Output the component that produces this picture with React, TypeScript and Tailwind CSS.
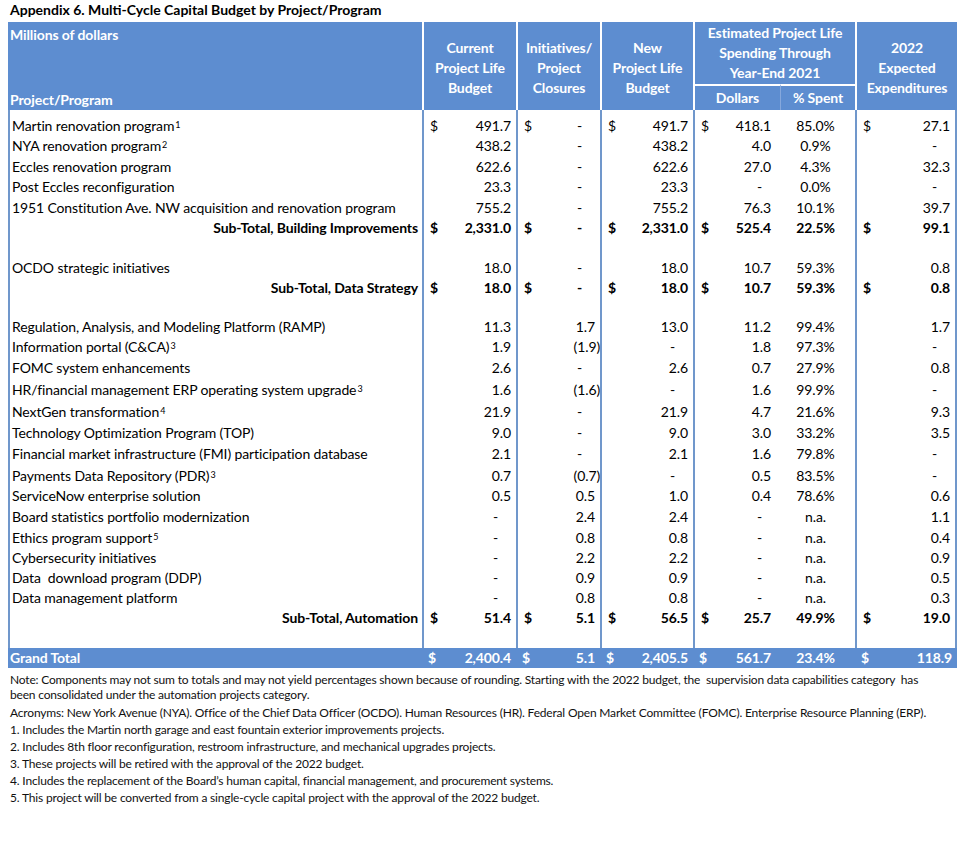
import React from 'react';

type Cell = { v: string; d?: boolean };

interface Row {
    kind: 'item' | 'sub' | 'blank';
    label?: string;
    sup?: string;
    h: number;
    cells?: Cell[];
    pct?: string;
}

const COLS = 'grid grid-cols-[414px_94px_84px_93px_87px_75px_102px]';
const FONT = { fontFamily: 'Lato, "Open Sans", sans-serif' };

const c = (v: string, d?: boolean): Cell => ({ v, d });

const rows: Row[] = [
    { kind: 'item', label: 'Martin renovation program', sup: '1', h: 26, cells: [c('491.7', true), c('-', true), c('491.7', true), c('418.1', true), c('27.1', true)], pct: '85.0%' },
    { kind: 'item', label: 'NYA renovation program', sup: '2', h: 20, cells: [c('438.2'), c('-'), c('438.2'), c('4.0'), c('-')], pct: '0.9%' },
    { kind: 'item', label: 'Eccles renovation program', h: 21, cells: [c('622.6'), c('-'), c('622.6'), c('27.0'), c('32.3')], pct: '4.3%' },
    { kind: 'item', label: 'Post Eccles reconfiguration', h: 20, cells: [c('23.3'), c('-'), c('23.3'), c('-'), c('-')], pct: '0.0%' },
    { kind: 'item', label: '1951 Constitution Ave. NW acquisition and renovation program', h: 21, cells: [c('755.2'), c('-'), c('755.2'), c('76.3'), c('39.7')], pct: '10.1%' },
    { kind: 'sub', label: 'Sub-Total, Building Improvements', h: 20, cells: [c('2,331.0', true), c('-', true), c('2,331.0', true), c('525.4', true), c('99.1', true)], pct: '22.5%' },
    { kind: 'blank', h: 20 },
    { kind: 'item', label: 'OCDO strategic initiatives', h: 20, cells: [c('18.0'), c('-'), c('18.0'), c('10.7'), c('0.8')], pct: '59.3%' },
    { kind: 'sub', label: 'Sub-Total, Data Strategy', h: 20, cells: [c('18.0', true), c('-', true), c('18.0', true), c('10.7', true), c('0.8', true)], pct: '59.3%' },
    { kind: 'blank', h: 20 },
    { kind: 'item', label: 'Regulation, Analysis, and Modeling Platform (RAMP)', h: 19, cells: [c('11.3'), c('1.7'), c('13.0'), c('11.2'), c('1.7')], pct: '99.4%' },
    { kind: 'item', label: 'Information portal (C&CA)', sup: '3', h: 20, cells: [c('1.9'), c('(1.9)'), c('-'), c('1.8'), c('-')], pct: '97.3%' },
    { kind: 'item', label: 'FOMC system enhancements', h: 21, cells: [c('2.6'), c('-'), c('2.6'), c('0.7'), c('0.8')], pct: '27.9%' },
    { kind: 'item', label: 'HR/financial management ERP operating system upgrade', sup: '3', h: 22, cells: [c('1.6'), c('(1.6)'), c('-'), c('1.6'), c('-')], pct: '99.9%' },
    { kind: 'item', label: 'NextGen transformation', sup: '4', h: 22, cells: [c('21.9'), c('-'), c('21.9'), c('4.7'), c('9.3')], pct: '21.6%' },
    { kind: 'item', label: 'Technology Optimization Program (TOP)', h: 21, cells: [c('9.0'), c('-'), c('9.0'), c('3.0'), c('3.5')], pct: '33.2%' },
    { kind: 'item', label: 'Financial market infrastructure (FMI) participation database', h: 21, cells: [c('2.1'), c('-'), c('2.1'), c('1.6'), c('-')], pct: '79.8%' },
    { kind: 'item', label: 'Payments Data Repository (PDR)', sup: '3', h: 22, cells: [c('0.7'), c('(0.7)'), c('-'), c('0.5'), c('-')], pct: '83.5%' },
    { kind: 'item', label: 'ServiceNow enterprise solution', h: 20, cells: [c('0.5'), c('0.5'), c('1.0'), c('0.4'), c('0.6')], pct: '78.6%' },
    { kind: 'item', label: 'Board statistics portfolio modernization', h: 21, cells: [c('-'), c('2.4'), c('2.4'), c('-'), c('1.1')], pct: 'n.a.' },
    { kind: 'item', label: 'Ethics program support', sup: '5', h: 21, cells: [c('-'), c('0.8'), c('0.8'), c('-'), c('0.4')], pct: 'n.a.' },
    { kind: 'item', label: 'Cybersecurity initiatives', h: 20, cells: [c('-'), c('2.2'), c('2.2'), c('-'), c('0.9')], pct: 'n.a.' },
    { kind: 'item', label: 'Data\u00a0 download program (DDP)', h: 20, cells: [c('-'), c('0.9'), c('0.9'), c('-'), c('0.5')], pct: 'n.a.' },
    { kind: 'item', label: 'Data management platform', h: 20, cells: [c('-'), c('0.8'), c('0.8'), c('-'), c('0.3')], pct: 'n.a.' },
    { kind: 'sub', label: 'Sub-Total, Automation', h: 20, cells: [c('51.4', true), c('5.1', true), c('56.5', true), c('25.7', true), c('19.0', true)], pct: '49.9%' },
    { kind: 'blank', h: 20 },
];

const grandTotal: Cell[] = [c('2,400.4', true), c('5.1', true), c('2,405.5', true), c('561.7', true), c('118.9', true)];

const notes = [
    'Acronyms: New York Avenue (NYA). Office of the Chief Data Officer (OCDO). Human Resources (HR). Federal Open Market Committee (FOMC). Enterprise Resource Planning (ERP).',
    '1. Includes the Martin north garage and east fountain exterior improvements projects.',
    '2. Includes 8th floor reconfiguration, restroom infrastructure, and mechanical upgrades projects.',
    '3. These projects will be retired with the approval of the 2022 budget.',
    '4. Includes the replacement of the Board\u2019s human capital, financial management, and procurement systems.',
    '5. This project will be converted from a single-cycle capital project with the approval of the 2022 budget.',
];

// one accounting-style value: "$" left, number right, dash set in from the edge
const Money: React.FC<{ cell?: Cell; border?: string; padR?: string }> = ({ cell, border = '', padR = 'pr-[5px]' }) => {
    if (!cell) return <div className={border} />;
    const paren = cell.v.startsWith('(');
    const dash = cell.v === '-';
    return (
        <div className={`flex items-end justify-between pl-[6px] pb-[2px] ${border}`}>
            <span>{cell.d ? '$' : ''}</span>
            <span className={paren ? 'pr-0' : dash ? 'pr-[18px]' : padR}>{cell.v}</span>
        </div>
    );
};

const bl = 'border-l-2 border-[#7097cb]';

const HeaderCell: React.FC<{ className?: string; children: React.ReactNode }> = ({ className = '', children }) => (
    <div className={`flex items-center justify-center text-center leading-[20px] ${className}`}>{children}</div>
);

export default function App() {
    return (
        <div className="min-h-[846px] w-[978px] bg-white text-black" style={FONT}>
            <div className="h-[22px] pl-[10px] text-[14px] font-bold leading-[20px]">
                Appendix 6. Multi-Cycle Capital Budget by Project/Program
            </div>

            <div className="ml-[8px] w-[949px]">
                {/* Header */}
                <div className={`${COLS} grid-rows-[62px_26px] bg-[#5d8dd0] text-[14px] font-bold text-white tracking-[-0.1px]`}>
                    <div className="row-span-2 flex flex-col justify-between pl-[2px] pt-[3px] leading-[20px]">
                        <span>Millions of dollars</span>
                        <span>Project/Program</span>
                    </div>
                    <HeaderCell className="row-span-2 border-l-2 border-white pt-[4px]">Current<br />Project Life<br />Budget</HeaderCell>
                    <HeaderCell className="row-span-2 border-l-2 border-white pt-[4px]">Initiatives/<br />Project<br />Closures</HeaderCell>
                    <HeaderCell className="row-span-2 border-l-2 border-white pt-[4px]">New<br />Project Life<br />Budget</HeaderCell>
                    <HeaderCell className="col-span-2 border-l-2 border-white">Estimated Project Life<br />Spending Through<br />Year-End 2021</HeaderCell>
                    <HeaderCell className="row-span-2 border-l-2 border-white pt-[4px]">2022<br />Expected<br />Expenditures</HeaderCell>
                    <HeaderCell className="border-l-2 border-t-2 border-white">Dollars</HeaderCell>
                    <HeaderCell className="border-l border-t-2 border-l-[#86a8dc] border-t-white">% Spent</HeaderCell>
                </div>

                {/* Body */}
                <div className="text-[14px] leading-[17px] tracking-[-0.12px]">
                    {rows.map((r, i) => (
                        <div key={i} className={COLS} style={{ height: r.h }}>
                            <div
                                className={`flex items-end border-l-2 border-[#7097cb] pb-[2px] ${
                                    r.kind === 'sub' ? 'justify-end pr-[4px] font-bold' : 'pl-[2px]'
                                }`}
                            >
                                {r.label}
                                {r.sup && <sup className="ml-[1px] text-[9px] leading-none top-[-5px]">{r.sup}</sup>}
                            </div>
                            <Money cell={r.cells?.[0]} border={`${bl} ${r.kind === 'sub' ? 'font-bold' : ''}`} />
                            <Money cell={r.cells?.[1]} border={`${bl} ${r.kind === 'sub' ? 'font-bold' : ''}`} />
                            <Money cell={r.cells?.[2]} border={`${bl} ${r.kind === 'sub' ? 'font-bold' : ''}`} />
                            <Money cell={r.cells?.[3]} border={`${bl} ${r.kind === 'sub' ? 'font-bold' : ''}`} padR="pr-[9px]" />
                            <div className={`flex items-end justify-center pb-[2px] pr-[4px] ${r.kind === 'sub' ? 'font-bold' : ''}`}>
                                {r.pct}
                            </div>
                            <Money cell={r.cells?.[4]} border={`${bl} border-r-2 ${r.kind === 'sub' ? 'font-bold' : ''}`} />
                        </div>
                    ))}

                    {/* Grand total */}
                    <div className={`${COLS} h-[20px] bg-[#5d8dd0] font-bold text-white`}>
                        <div className="flex items-end pl-[2px] pb-[2px]">Grand Total</div>
                        <Money cell={grandTotal[0]} border="pl-[2px]" />
                        <Money cell={grandTotal[1]} border="pl-[2px]" />
                        <Money cell={grandTotal[2]} border="pl-[2px]" />
                        <Money cell={grandTotal[3]} border="pl-[2px]" padR="pr-[9px]" />
                        <div className="flex items-end justify-center pb-[2px] pr-[4px]">23.4%</div>
                        <Money cell={grandTotal[4]} border="pl-[2px]" />
                    </div>
                </div>
            </div>

            {/* Notes */}
            <div className="mt-[4px] pl-[10px] text-[12px] tracking-[-0.18px] text-[#111]">
                <p className="leading-[15px] whitespace-nowrap">
                    Note: Components may not sum to totals and may not yield percentages shown because of rounding. Starting with the 2022 budget, the&nbsp; supervision data capabilities category&nbsp; has
                    <br />
                    been consolidated under the automation projects category.
                </p>
                <div className="mt-[2px]">
                    {notes.map((n, i) => (
                        <p key={i} className="h-[17px] leading-[17px] whitespace-nowrap">
                            {n}
                        </p>
                    ))}
                </div>
            </div>
        </div>
    );
}
